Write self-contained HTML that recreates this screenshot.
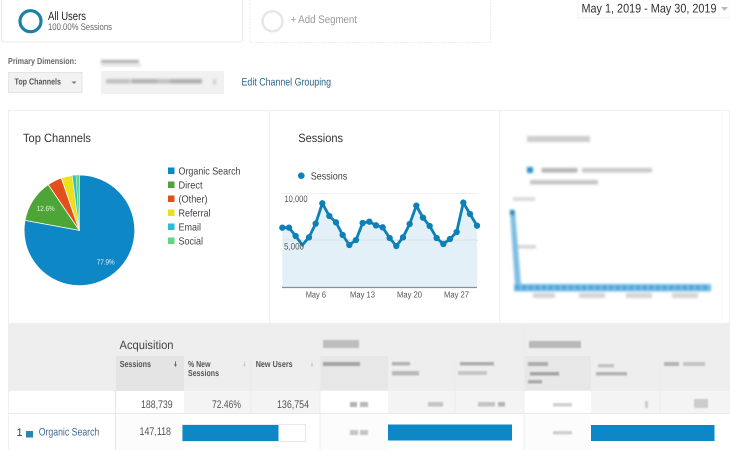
<!DOCTYPE html>
<html><head><meta charset="utf-8"><style>
html,body{margin:0;padding:0;background:#fff;width:730px;height:450px;overflow:hidden}
svg{display:block}
text{font-family:"Liberation Sans",sans-serif;text-rendering:geometricPrecision}
</style></head><body>
<svg width="730" height="450" viewBox="0 0 730 450" xmlns="http://www.w3.org/2000/svg">
<defs>
<filter id="b1" x="-5%" y="-20%" width="110%" height="140%"><feGaussianBlur stdDeviation="1.2"/></filter>
<filter id="b2" x="-5%" y="-20%" width="110%" height="140%"><feGaussianBlur stdDeviation="0.9"/></filter>
<filter id="s" x="-5%" y="-5%" width="110%" height="110%"><feGaussianBlur stdDeviation="0.25"/></filter>
</defs>
<rect width="730" height="450" fill="#fff"/>
<g filter="url(#s)">
<!-- segments -->
<rect x="1.5" y="-3" width="241" height="45" rx="2" fill="#fff" stroke="#e8e8e8"/>
<circle cx="30.5" cy="21.2" r="10.5" fill="none" stroke="#1b7fa4" stroke-width="3.2"/>
<text x="48" y="20" font-size="12" fill="#222" textLength="38" lengthAdjust="spacingAndGlyphs">All Users</text>
<text x="48" y="30" font-size="9.5" fill="#666" textLength="64" lengthAdjust="spacingAndGlyphs">100.00% Sessions</text>
<rect x="250" y="-3" width="240.5" height="45.5" fill="none" stroke="#e8e8e8" stroke-dasharray="1.5 1.5"/>
<circle cx="272.5" cy="21.3" r="10" fill="none" stroke="#e6e6e6" stroke-width="2.4"/>
<text x="290.5" y="23" font-size="11" fill="#999" textLength="66.5" lengthAdjust="spacingAndGlyphs">+ Add Segment</text>
<!-- date -->
<rect x="578" y="-2" width="152" height="20" fill="#fff" stroke="#f3f3f3"/>
<text x="581.5" y="12.5" font-size="12.5" fill="#333" textLength="135" lengthAdjust="spacingAndGlyphs">May 1, 2019 - May 30, 2019</text>
<path d="M721 7h7l-3.500 4z" fill="#bbb"/>
<!-- dimension row -->
<text x="8" y="64" font-size="8.800" font-weight="bold" fill="#666" textLength="68.500" lengthAdjust="spacingAndGlyphs">Primary Dimension:</text>
<rect x="8.500" y="72.500" width="73.500" height="20" fill="#f2f2f2" stroke="#e4e4e4"/>
<text x="14.500" y="84.500" font-size="8.800" font-weight="bold" fill="#555" textLength="46.500" lengthAdjust="spacingAndGlyphs">Top Channels</text>
<path d="M71.500 81.500h5l-2.500 2.500z" fill="#777"/>
<rect x="101" y="71" width="123" height="23" fill="#f1f1f1"/>
<text x="241.500" y="85.500" font-size="10.800" fill="#2c6485" textLength="89.500" lengthAdjust="spacingAndGlyphs">Edit Channel Grouping</text>
</g>
<g filter="url(#b1)">
<rect x="101" y="60" width="38" height="3" fill="#aaa"/>
<rect x="101" y="64.500" width="40" height="1.500" fill="#d0d0d0"/>
<rect x="106" y="79" width="24" height="4.500" fill="#c0c0c0"/>
<rect x="131" y="79" width="26" height="4.500" fill="#b0b0b0"/>
<rect x="157" y="79" width="13" height="4.500" fill="#c0c0c0"/>
<rect x="170" y="79" width="32" height="4.500" fill="#aeaeae"/>
<rect x="213" y="79" width="3" height="6" fill="#cfcfcf"/>
</g>

<!-- panels -->
<rect x="8.500" y="110.500" width="721" height="213" fill="#fff" stroke="#eeeeee"/>
<line x1="269.500" y1="110" x2="269.500" y2="324" stroke="#efefef"/>
<line x1="499.500" y1="110" x2="499.500" y2="324" stroke="#efefef"/>
<line x1="722" y1="110" x2="722" y2="324" stroke="#fafafa"/>

<g filter="url(#s)">
<text x="23" y="142" font-size="12" fill="#333" textLength="68" lengthAdjust="spacingAndGlyphs">Top Channels</text>
<!-- pie -->
<g transform="translate(0 110) scale(.33333)" stroke="#fff" stroke-width="2.400">
<path d="M238 361V195A166 166 0 1 1 75 331Z" fill="#0f87c5"/>
<path d="M238 361L75 331A166 166 0 0 1 144.700 223.700Z" fill="#4da537"/>
<path d="M238 361L144.700 223.700A166 166 0 0 1 184 204Z" fill="#e3501e"/>
<path d="M238 361L184 204A166 166 0 0 1 217 196.300Z" fill="#ebe01b"/>
<path d="M238 361L217 196.300A166 166 0 0 1 228 195.300Z" fill="#2fbcd6" stroke-width="1"/>
<path d="M238 361L228 195.300A166 166 0 0 1 238 195Z" fill="#5fd77e" stroke-width="1"/>
</g>
<text x="36.700" y="211" font-size="7.500" fill="#e8f3e0" textLength="18" lengthAdjust="spacingAndGlyphs">12.6%</text>
<text x="96.700" y="264.500" font-size="7.500" fill="#e6f3fb" textLength="18" lengthAdjust="spacingAndGlyphs">77.9%</text>
<!-- legend -->
<rect x="168" y="167.500" width="6.500" height="6.500" fill="#0f87c5"/>
<rect x="168" y="181.500" width="6.500" height="6.500" fill="#4da537"/>
<rect x="168" y="195.500" width="6.500" height="6.500" fill="#e3501e"/>
<rect x="168" y="209.500" width="6.500" height="6.500" fill="#ebe01b"/>
<rect x="168" y="223.500" width="6.500" height="6.500" fill="#2fbcd6"/>
<rect x="168" y="237.500" width="6.500" height="6.500" fill="#5fd77e"/>
<g font-size="10.300" fill="#444">
<text x="178.500" y="174.500" textLength="62" lengthAdjust="spacingAndGlyphs">Organic Search</text>
<text x="178.500" y="188.500" textLength="24" lengthAdjust="spacingAndGlyphs">Direct</text>
<text x="178.500" y="202.500" textLength="29" lengthAdjust="spacingAndGlyphs">(Other)</text>
<text x="178.500" y="216.500" textLength="32" lengthAdjust="spacingAndGlyphs">Referral</text>
<text x="178.500" y="230.500" textLength="22.500" lengthAdjust="spacingAndGlyphs">Email</text>
<text x="178.500" y="244.500" textLength="24.500" lengthAdjust="spacingAndGlyphs">Social</text>
</g>

<!-- line chart -->
<text x="298.300" y="142" font-size="12" fill="#333" textLength="44.700" lengthAdjust="spacingAndGlyphs">Sessions</text>
<circle cx="301.300" cy="175.700" r="3.300" fill="#1180b8"/>
<text x="310.700" y="179.300" font-size="10.300" fill="#444" textLength="36.600" lengthAdjust="spacingAndGlyphs">Sessions</text>
<line x1="282" y1="193.500" x2="478" y2="193.500" stroke="#efefef"/>
<line x1="282" y1="240.500" x2="478" y2="240.500" stroke="#e2e6e8"/>
<g transform="translate(270 110) scale(.33333)">
<path d="M37 353L57 353L77 378L97 405L117 382L137 341L157 280L178 318L198 337L218 375L238 405L258 390L278 339L298 335L318 346L338 352L359 384L379 408L399 382L419 342L439 287L459 323L479 348L500 384L520 402L540 387L560 366L580 278L600 312L621 347V532H37Z" fill="#e3f0f8"/>
<line x1="37" y1="390" x2="621" y2="390" stroke="#d8e2e8" stroke-width="3"/>
<path d="M37 353L57 353L77 378L97 405L117 382L137 341L157 280L178 318L198 337L218 375L238 405L258 390L278 339L298 335L318 346L338 352L359 384L379 408L399 382L419 342L439 287L459 323L479 348L500 384L520 402L540 387L560 366L580 278L600 312L621 347" fill="none" stroke="#1180b8" stroke-width="8.500"/>
<g fill="#1180b8">
<circle cx="37" cy="353" r="9.500"/><circle cx="57" cy="353" r="9.500"/><circle cx="77" cy="378" r="9.500"/><circle cx="117" cy="382" r="9.500"/><circle cx="137" cy="341" r="9.500"/><circle cx="157" cy="280" r="9.500"/><circle cx="178" cy="318" r="9.500"/><circle cx="198" cy="337" r="9.500"/><circle cx="218" cy="375" r="9.500"/><circle cx="238" cy="405" r="9.500"/><circle cx="258" cy="390" r="9.500"/><circle cx="278" cy="339" r="9.500"/><circle cx="298" cy="335" r="9.500"/><circle cx="318" cy="346" r="9.500"/><circle cx="338" cy="352" r="9.500"/><circle cx="359" cy="384" r="9.500"/><circle cx="379" cy="408" r="9.500"/><circle cx="399" cy="382" r="9.500"/><circle cx="419" cy="342" r="9.500"/><circle cx="439" cy="287" r="9.500"/><circle cx="459" cy="323" r="9.500"/><circle cx="479" cy="348" r="9.500"/><circle cx="500" cy="384" r="9.500"/><circle cx="520" cy="402" r="9.500"/><circle cx="540" cy="387" r="9.500"/><circle cx="560" cy="366" r="9.500"/><circle cx="580" cy="278" r="9.500"/><circle cx="600" cy="312" r="9.500"/><circle cx="621" cy="347" r="9.500"/>
</g>
</g>
<line x1="282" y1="287.500" x2="477" y2="287.500" stroke="#8b8f93" stroke-width="1.300"/>
<g font-size="9.300" fill="#555">
<text x="284.500" y="202" textLength="23" lengthAdjust="spacingAndGlyphs">10,000</text>
<text x="284" y="249.500" textLength="20" lengthAdjust="spacingAndGlyphs">5,000</text>
<text x="305.700" y="297.700" font-size="8.800" textLength="20.300" lengthAdjust="spacingAndGlyphs">May 6</text>
<text x="350" y="297.700" font-size="8.800" textLength="25" lengthAdjust="spacingAndGlyphs">May 13</text>
<text x="397" y="297.700" font-size="8.800" textLength="25" lengthAdjust="spacingAndGlyphs">May 20</text>
<text x="444" y="297.700" font-size="8.800" textLength="25" lengthAdjust="spacingAndGlyphs">May 27</text>
</g>
</g>

<!-- blurred third chart -->
<g filter="url(#b1)">
<rect x="527" y="136" width="63" height="6" fill="#cccccc"/>
<rect x="527" y="167" width="6" height="6" fill="#2a90c8"/>
<rect x="541.500" y="168" width="36" height="4.500" fill="#b4b4b4"/>
<rect x="582" y="168" width="70" height="4.500" fill="#c8c8c8"/>
<rect x="530" y="180" width="68" height="4.500" fill="#c4c4c4"/>
<rect x="513" y="197" width="22" height="4" fill="#dcdcdc"/>
<rect x="513" y="245" width="23" height="3.500" fill="#d4d4d4"/>
<rect x="533" y="293" width="22" height="5" fill="#d4d4d4"/>
<rect x="579" y="293" width="26" height="5" fill="#d4d4d4"/>
<rect x="626" y="293" width="26" height="5" fill="#d4d4d4"/>
<rect x="672" y="293" width="26" height="5" fill="#d4d4d4"/>
<path d="M510 211L515 285H521L515 211Z" fill="#7cbde2"/>
<rect x="514" y="284" width="197" height="7.500" fill="#7cc0e6"/>
<line x1="515" y1="287.500" x2="710" y2="287.500" stroke="#4aa6d8" stroke-width="5" stroke-dasharray="4.500 2.200"/>
<rect x="510" y="210" width="4.500" height="5" fill="#1a7fb5"/>
</g>

<!-- table -->
<rect x="8" y="324" width="722" height="67" fill="#eeeeee"/>
<rect x="116" y="356" width="68" height="35" fill="#e4e4e4"/>
<rect x="320" y="356" width="68" height="34" fill="#e7e7e7"/>
<rect x="524" y="356" width="67" height="34" fill="#e7e7e7"/>
<rect x="8" y="391" width="108" height="22" fill="#fff"/>
<rect x="116" y="391" width="68" height="22" fill="#fff"/>
<rect x="184" y="391" width="136" height="22" fill="#f4f4f4"/>
<rect x="320" y="391" width="68" height="22" fill="#fff"/>
<rect x="388" y="391" width="136" height="22" fill="#f4f4f4"/>
<rect x="524" y="391" width="67" height="22" fill="#fff"/>
<rect x="591" y="391" width="139" height="22" fill="#f4f4f4"/>
<rect x="116" y="414" width="66" height="36" fill="#fcfcfc"/>
<rect x="320" y="414" width="68" height="36" fill="#fcfcfc"/>
<rect x="524" y="414" width="67" height="36" fill="#fcfcfc"/>
<line x1="8" y1="413.500" x2="730" y2="413.500" stroke="#e9e9e9"/>
<line x1="8.500" y1="391" x2="8.500" y2="450" stroke="#f0f0f0"/>
<line x1="115.500" y1="391" x2="115.500" y2="450" stroke="#e6e6e6"/>
<line x1="251" y1="356" x2="251" y2="413" stroke="#eaeaea"/>
<line x1="320" y1="324" x2="320" y2="450" stroke="#ececec"/>
<line x1="455" y1="356" x2="455" y2="413" stroke="#ececec"/>
<line x1="524" y1="324" x2="524" y2="450" stroke="#ececec"/>
<line x1="660" y1="356" x2="660" y2="413" stroke="#ececec"/>

<rect x="182.500" y="424.500" width="123" height="17" fill="#fff" stroke="#e8e8e8"/>
<rect x="182.500" y="425" width="96" height="16" fill="#0f87c5"/>
<g filter="url(#s)">
<rect x="388" y="424.500" width="124" height="16" fill="#0f87c5"/>
<rect x="591" y="425" width="123.500" height="16" fill="#0f87c5"/>
</g>

<g filter="url(#s)">
<text x="119.500" y="349" font-size="12" fill="#444" textLength="54" lengthAdjust="spacingAndGlyphs">Acquisition</text>
<g font-size="8.800" font-weight="bold" fill="#555">
<text x="119.700" y="367" textLength="31.300" lengthAdjust="spacingAndGlyphs">Sessions</text>
<text x="188" y="367" textLength="22.500" lengthAdjust="spacingAndGlyphs">% New</text>
<text x="188" y="376" textLength="31" lengthAdjust="spacingAndGlyphs">Sessions</text>
<text x="255.700" y="367" textLength="37" lengthAdjust="spacingAndGlyphs">New Users</text>
</g>
<path d="M175 361.500h1v3h1l-1.500 2.500l-1.500-2.500h1z" fill="#666"/>
<path d="M244 361.500h1v3h1l-1.500 2.500l-1.500-2.500h1z" fill="#ccc"/>
<path d="M311.500 361.500h1v3h1l-1.500 2.500l-1.500-2.500h1z" fill="#ccc"/>
<g font-size="11" fill="#555">
<text x="141" y="408" textLength="31.600" lengthAdjust="spacingAndGlyphs">188,739</text>
<text x="212" y="408" textLength="29" lengthAdjust="spacingAndGlyphs">72.46%</text>
<text x="277" y="408" textLength="32" lengthAdjust="spacingAndGlyphs">136,754</text>
<text x="139.500" y="435" textLength="31.500" lengthAdjust="spacingAndGlyphs">147,118</text>
<text x="16.500" y="436" fill="#444">1</text>
<text x="38.700" y="435.500" fill="#3f6a94" textLength="60.600" lengthAdjust="spacingAndGlyphs">Organic Search</text>
</g>
<rect x="26" y="431" width="7" height="6.500" fill="#2a86b0"/>
</g>

<!-- blurred table content -->
<g filter="url(#b2)" fill="#a8a8a8">
<rect x="323" y="340" width="36" height="8" fill="#bdbdbd"/>
<rect x="529" y="341" width="52" height="7" fill="#b8b8b8"/>
<rect x="323" y="362" width="37" height="4" fill="#a4a4a4"/>
<rect x="392" y="362" width="18" height="3.500" fill="#b4b4b4"/>
<rect x="392" y="371" width="27" height="4.500" fill="#bababa"/>
<rect x="460" y="362" width="34" height="3.500" fill="#aeaeae"/>
<rect x="458" y="371" width="29" height="4" fill="#c6c6c6"/>
<rect x="528" y="362" width="20" height="4" fill="#aeaeae"/>
<rect x="530" y="372" width="29" height="3.500" fill="#a4a4a4"/>
<rect x="528" y="380" width="14" height="3.500" fill="#aaa"/>
<rect x="598" y="364" width="16" height="3.500" fill="#c4c4c4"/>
<rect x="596" y="372" width="31" height="3.500" fill="#b4b4b4"/>
<rect x="664" y="362" width="15" height="4" fill="#b4b4b4"/>
<rect x="683" y="362" width="22" height="4" fill="#c4c4c4"/>
<rect x="350" y="402" width="7" height="5" fill="#b4b4b4"/>
<rect x="360" y="402" width="8" height="5" fill="#bababa"/>
<rect x="428" y="402" width="15" height="4.500" fill="#c4c4c4"/>
<rect x="478" y="402" width="17" height="4.500" fill="#c4c4c4"/>
<rect x="498" y="402" width="7" height="4.500" fill="#b4b4b4"/>
<rect x="553" y="403" width="19" height="3.500" fill="#d0d0d0"/>
<rect x="645" y="401" width="3" height="7" fill="#cccccc"/>
<rect x="694" y="399" width="14" height="9" fill="#cccccc"/>
<rect x="350" y="430" width="8" height="5" fill="#c4c4c4"/>
<rect x="360" y="430" width="8" height="5" fill="#c4c4c4"/>
<rect x="553" y="431" width="19" height="3.500" fill="#d0d0d0"/>
</g>
</svg>
</body></html>
